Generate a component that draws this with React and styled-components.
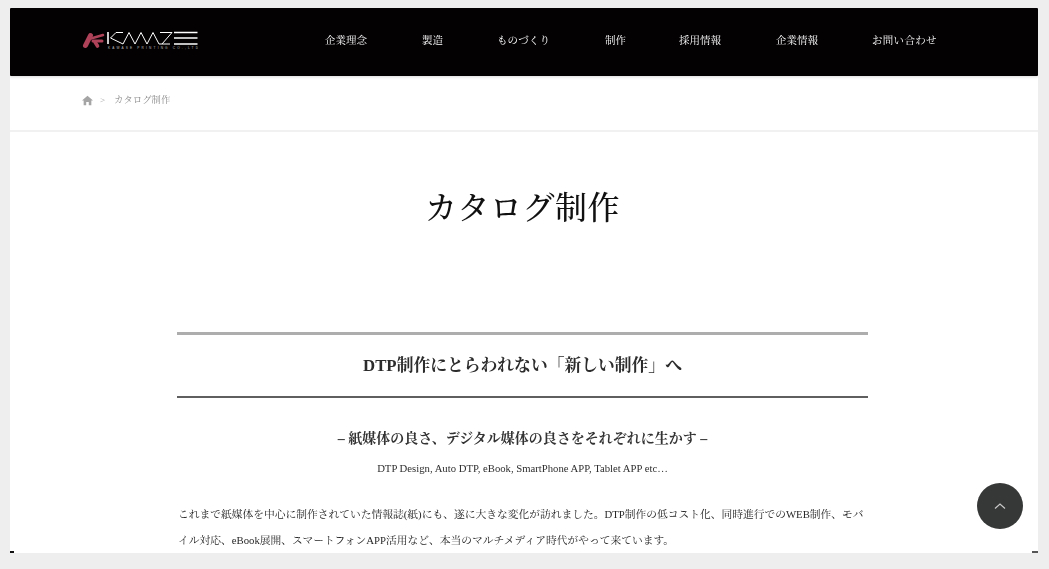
import React from "react";
import styled, { createGlobalStyle, css } from "styled-components";

const serif = `"Liberation Serif", "Noto Serif CJK JP", "Noto Sans CJK JP", serif`;

const grayText = css`
  will-change: transform;
`;

const Global = createGlobalStyle`
  html, body { margin: 0; padding: 0; background: #eeeeee; height: 569px; overflow: hidden; }
  * { box-sizing: border-box; }
`;

const Page = styled.div`
  position: relative;
  height: 569px;
  padding: 8px 11px 16px 10px;
  background: #eeeeee;
  font-family: ${serif};
`;
const Frame = styled.div`
  position: relative;
  height: 545px;
  display: flex;
  flex-direction: column;
  overflow: hidden;
  background: #ffffff;
`;
const Header = styled.header`
  flex: none;
  height: 68px;
  background: #040102;
  display: flex;
  align-items: center;
  padding-left: 72px;
  box-shadow: 0 1px 3px rgba(0,0,0,.15);
  position: relative;
  border-radius: 1px;
`;
const Logo = styled.svg`
  flex: none;
  display: block;
  width: 116px;
  height: 20px;
  margin-top: -4px;
`;
const Nav = styled.nav`
  ${grayText}
  display: flex;
  margin-left: 127px;
  margin-top: -3px;
  color: #ffffff;
  font-size: 10.5px;
  line-height: 14px;
`;
const NavItem = styled.a`
  display: block;
  margin-right: ${p => p.$gap}px;
  white-space: nowrap;
  letter-spacing: ${p => p.$ls || 0}px;
`;
const Crumbs = styled.div`
  ${grayText}
  flex: none;
  height: 54px;
  padding: 17px 0 0 72px;
  display: flex;
  align-items: flex-start;
  gap: 7px;
  color: #8c8c8c;
  font-size: 9.4px;
  line-height: 15px;
`;
const Divider = styled.div`
  flex: none;
  height: 2px;
  background: #f1f1f1;
`;
const Sep = styled.span`
  color: #a5a5a5;
  font-size: 9px;
  margin-right: 2px;
`;
const Main = styled.main`
  ${grayText}
  flex: 1;
  min-height: 0;
  padding: 54px 170px 0 167px;
`;
const Title = styled.h1`
  margin: 0 0 102px;
  height: 44px;
  text-align: center;
  font-size: 32px;
  line-height: 44px;
  font-weight: 500;
  color: #111;
  letter-spacing: 0.5px;
`;
const Band = styled.div`
  height: 66px;
  border-top: 3px solid #adadad;
  border-bottom: 2px solid #5f5f5f;
  display: flex;
  align-items: center;
  justify-content: center;
`;
const Heading = styled.h2`
  margin: 0;
  font-size: 16.8px;
  line-height: 24px;
  font-weight: 700;
  color: #2c2c2c;
`;
const Sub = styled.h3`
  margin: 31px 0 0;
  text-align: center;
  font-size: 14px;
  line-height: 20px;
  font-weight: 700;
  color: #333;
`;
const Tags = styled.p`
  margin: 11px 0 0;
  text-align: center;
  font-size: 10.7px;
  line-height: 16px;
  color: #2e2e2e;
`;
const Body = styled.p`
  margin: 25px 0 0;
  padding-left: 1px;
  font-size: 10.75px;
  line-height: 26px;
  color: #262626;
  width: 690px;
`;
const TopButton = styled.button`
  position: absolute;
  left: 977px;
  top: 483px;
  width: 46px;
  height: 46px;
  border: 0;
  border-radius: 50%;
  padding: 0;
  background: #363737;
  display: flex;
  align-items: center;
  justify-content: center;
`;
const Corner = styled.span`
  position: absolute;
  bottom: 0;
  ${p => p.$right ? "right: 0; width: 6px;" : "left: 0; width: 4px;"}
  height: 2px;
  background: ${p => p.$right ? "#555" : "#111"};
`;

const navItems = [
  ["企業理念", 55],
  ["製造", 54],
  ["ものづくり", 55, 0.1],
  ["制作", 53],
  ["採用情報", 55],
  ["企業情報", 54],
  ["お問い合わせ", 0, 0.3],
];

function KawaseLogo() {
  return (
    <Logo viewBox="0 0 116 20" aria-label="KAWASE">
      <g fill="none" stroke="#ad4258" strokeLinecap="round">
        <path d="M8.5 5.5 L3.5 15.5" strokeWidth="5" />
        <path d="M9 8.5 L21 5" strokeWidth="2.6" />
        <path d="M11 11 L20 11" strokeWidth="3" />
        <path d="M13 12 L15.5 16" strokeWidth="3.6" />
      </g>
      <g fill="none" stroke="#ffffff" strokeWidth="1">
        <path d="M26 2 V14" strokeWidth="1.6" />
        <path d="M41 2.5 H34 L28.5 8 L41 14" />
        <path d="M41 14 L47 2.5 L53 14" />
        <path d="M53 14 L59 2.5 L65 14" />
        <path d="M65 14 L71 2.5 L77 14 H88" />
        <path d="M78 2.5 H90 L80 14" />
        <path d="M92 2.5 H115.5 M92 8 H115.5 M92 14 H115.5" strokeWidth="1.5" />
      </g>
      <text x="26" y="18.5" fontSize="3.2" fill="#bdbdbd" fontFamily="Liberation Sans, sans-serif" textLength="90">KAWASE PRINTING CO.,LTD</text>
    </Logo>
  );
}

export default function App() {
  return (
    <Page>
      <Global />
      <Frame>
        <Header>
          <KawaseLogo />
          <Nav>
            {navItems.map(([t, g, ls]) => (
              <NavItem key={t} $gap={g} $ls={ls}>{t}</NavItem>
            ))}
          </Nav>
        </Header>
        <Crumbs>
          <svg width="11" height="11" viewBox="0 0 12 12" style={{ marginTop: 2 }}>
            <path d="M6 .8 L12 6 H10.2 V11.2 H7.4 V7.6 H4.6 V11.2 H1.8 V6 H0 Z" fill="#a5a5a5" />
          </svg>
          <Sep>&gt;</Sep>
          <span>カタログ制作</span>
        </Crumbs>
        <Divider />
        <Main>
          <Title>カタログ制作</Title>
          <Band>
            <Heading>DTP制作にとらわれない「新しい制作」へ</Heading>
          </Band>
          <Sub>– 紙媒体の良さ、デジタル媒体の良さをそれぞれに生かす –</Sub>
          <Tags>DTP Design, Auto DTP, eBook, SmartPhone APP, Tablet APP etc…</Tags>
          <Body>
            これまで紙媒体を中心に制作されていた情報誌(紙)にも、遂に大きな変化が訪れました。DTP制作の低コスト化、同時進行でのWEB制作、モバイル対応、eBook展開、スマートフォンAPP活用など、本当のマルチメディア時代がやって来ています。
          </Body>
        </Main>
        <Corner />
        <Corner $right />
      </Frame>
      <TopButton aria-label="ページトップへ">
        <svg width="14" height="10" viewBox="0 0 14 10">
          <path d="M2 7.5 L7 3 L12 7.5" fill="none" stroke="#c9c9c9" strokeWidth="1.2" />
        </svg>
      </TopButton>
    </Page>
  );
}
